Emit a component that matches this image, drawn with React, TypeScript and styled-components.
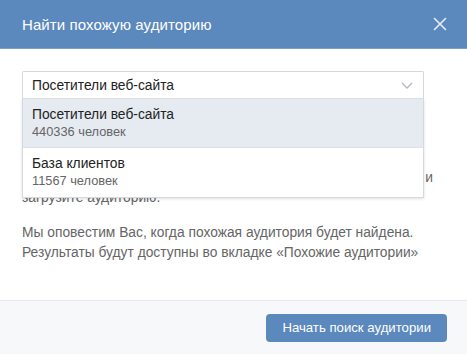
import React from "react";
import styled, { createGlobalStyle } from "styled-components";

const GlobalStyle = createGlobalStyle`
  html, body {
    margin: 0;
    padding: 0;
    background: #fff;
  }
  body {
    font-family: "Liberation Sans", Arial, sans-serif;
    -webkit-font-smoothing: antialiased;
  }
`;

const Modal = styled.div`
  width: 467px;
  height: 354px;
  display: flex;
  flex-direction: column;
  background: #fff;
  overflow: hidden;
`;

const Header = styled.div`
  height: 49px;
  flex-shrink: 0;
  display: flex;
  align-items: center;
  justify-content: space-between;
  padding: 0 15px 0 22px;
  background: #5b88bd;
  box-sizing: border-box;
  border-bottom: 1px solid #7fa1c9;
`;

const Title = styled.div`
  color: #fff;
  font-size: 15px;
  letter-spacing: 0.1px;
`;

const CloseButton = styled.button`
  width: 24px;
  height: 24px;
  padding: 0;
  border: 0;
  background: none;
  display: flex;
  align-items: center;
  justify-content: center;
  cursor: pointer;
`;

const Body = styled.div`
  flex: 1;
  padding: 22px 22px 0;
`;

const SelectWrap = styled.div`
  position: relative;
  margin-right: 21px;
`;

const SelectBox = styled.div`
  height: 28px;
  box-sizing: border-box;
  border: 1px solid #d3d9de;
  border-bottom-color: #e1e5ea;
  border-radius: 2px 2px 0 0;
  display: flex;
  align-items: center;
  justify-content: space-between;
  padding: 0 10px 0 9px;
  font-size: 13.8px;
  color: #222;
`;

const Menu = styled.div`
  position: absolute;
  left: 0;
  right: 0;
  top: 28px;
  background: #fff;
  border: 1px solid #d3d9de;
  border-top: 0;
  box-shadow: 0 1px 3px rgba(0, 0, 0, 0.12);
  z-index: 2;
`;

const Option = styled.div<{ $active?: boolean }>`
  height: 49px;
  box-sizing: border-box;
  padding: 7px 9px 0;
  background: ${(p) => (p.$active ? "#e5ebf1" : "#fff")};
  border-bottom: ${(p) => (p.$active ? "1px solid #dce1e6" : "0")};
`;

const OptionTitle = styled.div`
  font-size: 13.8px;
  line-height: 17px;
  color: #222;
`;

const OptionSub = styled.div`
  font-size: 12.8px;
  line-height: 16px;
  color: #656565;
  margin-top: 1px;
`;

const Texts = styled.div`
  margin-top: 29px;
`;

const Text = styled.p<{ $nowrap?: boolean }>`
  margin: 0;
  font-size: 13.8px;
  line-height: 20px;
  color: #656565;
  white-space: ${(p) => (p.$nowrap ? "nowrap" : "normal")};

  & + & {
    margin-top: 15px;
  }
`;

const Footer = styled.div`
  height: 54px;
  flex-shrink: 0;
  box-sizing: border-box;
  background: #f7f8fa;
  border-top: 1px solid #e7e8ec;
  display: flex;
  align-items: center;
  justify-content: flex-end;
  padding: 0 20px;
`;

const PrimaryButton = styled.button`
  height: 28px;
  padding: 0 16px;
  border: 0;
  border-radius: 4px;
  background: #5b88bd;
  color: #fff;
  font-family: inherit;
  font-size: 13.2px;
  font-weight: 500;
  cursor: pointer;
`;

const options = [
  { title: "Посетители веб-сайта", count: "440336 человек" },
  { title: "База клиентов", count: "11567 человек" },
];

const App: React.FC = () => {
  return (
    <>
      <GlobalStyle />
      <Modal>
        <Header>
          <Title>Найти похожую аудиторию</Title>
          <CloseButton aria-label="Закрыть">
            <svg width="14" height="14" viewBox="0 0 14 14">
              <path
                d="M1.5 1.5l11 11M12.5 1.5l-11 11"
                stroke="rgba(255,255,255,0.85)"
                strokeWidth="1.6"
                strokeLinecap="round"
              />
            </svg>
          </CloseButton>
        </Header>

        <Body>
          <SelectWrap>
            <SelectBox>
              <span>Посетители веб-сайта</span>
              <svg width="12" height="7" viewBox="0 0 12 7">
                <path d="M1 1l5 5 5-5" fill="none" stroke="#aeb7c2" strokeWidth="1.3" />
              </svg>
            </SelectBox>
            <Menu>
              {options.map((o, i) => (
                <Option key={o.title} $active={i === 0}>
                  <OptionTitle>{o.title}</OptionTitle>
                  <OptionSub>{o.count}</OptionSub>
                </Option>
              ))}
            </Menu>
          </SelectWrap>

          <Texts>
            <Text $nowrap>
              Выберите аудиторию, на основе которой будет найдена
              <br />
              похожая. Если в списке подходящей
              <br />
              аудитории нет, подключите пиксель ретаргетинга на свой сайт и
              <br />
              загрузите аудиторию.
            </Text>
            <Text>
              Мы оповестим Вас, когда похожая аудитория будет найдена.
              <br />
              Результаты будут доступны во вкладке «Похожие аудитории»
            </Text>
          </Texts>
        </Body>

        <Footer>
          <PrimaryButton>Начать поиск аудитории</PrimaryButton>
        </Footer>
      </Modal>
    </>
  );
};

export default App;
